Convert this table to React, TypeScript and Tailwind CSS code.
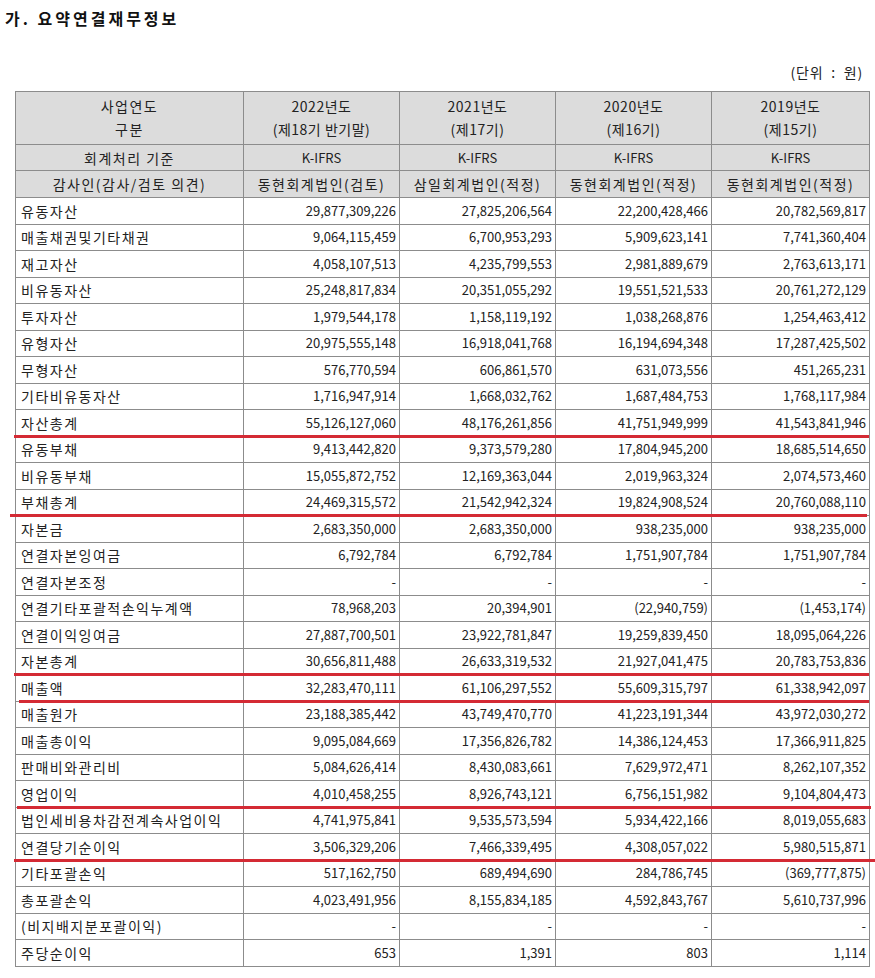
import React from 'react';

type Row = {
  label: string;
  values: string[];
  mark?: string; // red underline annotation
};

const rows: Row[] = [
  { label: '유동자산', values: ['29,877,309,226', '27,825,206,564', '22,200,428,466', '20,782,569,817'] },
  { label: '매출채권및기타채권', values: ['9,064,115,459', '6,700,953,293', '5,909,623,141', '7,741,360,404'] },
  { label: '재고자산', values: ['4,058,107,513', '4,235,799,553', '2,981,889,679', '2,763,613,171'] },
  { label: '비유동자산', values: ['25,248,817,834', '20,351,055,292', '19,551,521,533', '20,761,272,129'] },
  { label: '투자자산', values: ['1,979,544,178', '1,158,119,192', '1,038,268,876', '1,254,463,412'] },
  { label: '유형자산', values: ['20,975,555,148', '16,918,041,768', '16,194,694,348', '17,287,425,502'] },
  { label: '무형자산', values: ['576,770,594', '606,861,570', '631,073,556', '451,265,231'] },
  { label: '기타비유동자산', values: ['1,716,947,914', '1,668,032,762', '1,687,484,753', '1,768,117,984'] },
  { label: '자산총계', values: ['55,126,127,060', '48,176,261,856', '41,751,949,999', '41,543,841,946'], mark: 'left-[-2px] w-[855px]' },
  { label: '유동부채', values: ['9,413,442,820', '9,373,579,280', '17,804,945,200', '18,685,514,650'] },
  { label: '비유동부채', values: ['15,055,872,752', '12,169,363,044', '2,019,963,324', '2,074,573,460'] },
  { label: '부채총계', values: ['24,469,315,572', '21,542,942,324', '19,824,908,524', '20,760,088,110'], mark: 'left-[-6px] w-[857px]' },
  { label: '자본금', values: ['2,683,350,000', '2,683,350,000', '938,235,000', '938,235,000'] },
  { label: '연결자본잉여금', values: ['6,792,784', '6,792,784', '1,751,907,784', '1,751,907,784'] },
  { label: '연결자본조정', values: ['-', '-', '-', '-'] },
  { label: '연결기타포괄적손익누계액', values: ['78,968,203', '20,394,901', '(22,940,759)', '(1,453,174)'] },
  { label: '연결이익잉여금', values: ['27,887,700,501', '23,922,781,847', '19,259,839,450', '18,095,064,226'] },
  { label: '자본총계', values: ['30,656,811,488', '26,633,319,532', '21,927,041,475', '20,783,753,836'], mark: 'left-[-2px] w-[855px]' },
  { label: '매출액', values: ['32,283,470,111', '61,106,297,552', '55,609,315,797', '61,338,942,097'], mark: 'left-[3px] w-[850px]' },
  { label: '매출원가', values: ['23,188,385,442', '43,749,470,770', '41,223,191,344', '43,972,030,272'] },
  { label: '매출총이익', values: ['9,095,084,669', '17,356,826,782', '14,386,124,453', '17,366,911,825'] },
  { label: '판매비와관리비', values: ['5,084,626,414', '8,430,083,661', '7,629,972,471', '8,262,107,352'] },
  { label: '영업이익', values: ['4,010,458,255', '8,926,743,121', '6,756,151,982', '9,104,804,473'], mark: 'left-[1px] w-[854px]' },
  { label: '법인세비용차감전계속사업이익', values: ['4,741,975,841', '9,535,573,594', '5,934,422,166', '8,019,055,683'] },
  { label: '연결당기순이익', values: ['3,506,329,206', '7,466,339,495', '4,308,057,022', '5,980,515,871'], mark: 'left-[-2px] w-[861px]' },
  { label: '기타포괄손익', values: ['517,162,750', '689,494,690', '284,786,745', '(369,777,875)'] },
  { label: '총포괄손익', values: ['4,023,491,956', '8,155,834,185', '4,592,843,767', '5,610,737,996'] },
  { label: '(비지배지분포괄이익)', values: ['-', '-', '-', '-'] },
  { label: '주당순이익', values: ['653', '1,391', '803', '1,114'] },
];

const years = [
  { year: '2022년도', term: '(제18기 반기말)', audit: '동현회계법인(검토)' },
  { year: '2021년도', term: '(제17기)', audit: '삼일회계법인(적정)' },
  { year: '2020년도', term: '(제16기)', audit: '동현회계법인(적정)' },
  { year: '2019년도', term: '(제15기)', audit: '동현회계법인(적정)' },
];

const font = { fontFamily: '"Noto Sans CJK KR", "Noto Sans", sans-serif' };

const App: React.FC = () => {
  return (
    <div className="w-[875px] h-[978px] bg-white text-[#222] overflow-hidden" style={font}>
      {/* Title */}
      <h2 className="pl-[5px] pt-[6px] text-[16px] tracking-[3px] font-bold leading-[24px] text-[#111]">가. 요약연결재무정보</h2>

      {/* Unit */}
      <div className="mt-[33px] pr-[12px] text-right text-[14px] tracking-[0.8px] leading-[18px] whitespace-pre">(단위  :  원)</div>

      <div className="pl-[15px] pt-[10px]">
        <table className="border-collapse border border-black text-[13px] leading-[16px] table-fixed w-[854px]">
          <colgroup>
            <col className="w-[228px]" />
            <col className="w-[156px]" />
            <col className="w-[156px]" />
            <col className="w-[156px]" />
            <col className="w-[158px]" />
          </colgroup>
          <thead className="text-[14px] tracking-[1.5px]">
            <tr className="bg-[#dcdcdc] h-[53px]">
              <th className="border border-[#8c8c8c] font-normal text-center leading-[23px]">
                사업연도<br />구분
              </th>
              {years.map((y) => (
                <th key={y.year} className="border border-[#8c8c8c] font-normal text-center leading-[23px] tracking-[0.5px]">
                  {y.year}<br />{y.term}
                </th>
              ))}
            </tr>
            <tr className="bg-[#dcdcdc] h-[26px]">
              <th className="border border-[#8c8c8c] font-normal text-center">회계처리 기준</th>
              {years.map((y) => (
                <th key={y.year} className="border border-[#8c8c8c] font-normal text-center text-[13px] tracking-normal">K-IFRS</th>
              ))}
            </tr>
            <tr className="bg-[#dcdcdc] h-[27px]">
              <th className="border border-[#8c8c8c] font-normal text-center">감사인(감사/검토 의견)</th>
              {years.map((y) => (
                <th key={y.year} className="border border-[#8c8c8c] font-normal text-center">{y.audit}</th>
              ))}
            </tr>
          </thead>
          <tbody>
            {rows.map((r, i) => (
              <tr key={i} className="h-[26.5px]">
                <td className="relative border border-[#8c8c8c] pl-[5px] text-left whitespace-nowrap text-[14px] tracking-[1.5px]">
                  {r.label}
                  {r.mark && (
                    <span className={`absolute bottom-[-2px] h-[3px] bg-[#d42a34] z-10 ${r.mark}`} />
                  )}
                </td>
                {r.values.map((v, j) => (
                  <td key={j} className="border border-[#8c8c8c] pr-[3px] text-right whitespace-nowrap">
                    {v}
                  </td>
                ))}
              </tr>
            ))}
          </tbody>
        </table>
      </div>
    </div>
  );
};

export default App;
